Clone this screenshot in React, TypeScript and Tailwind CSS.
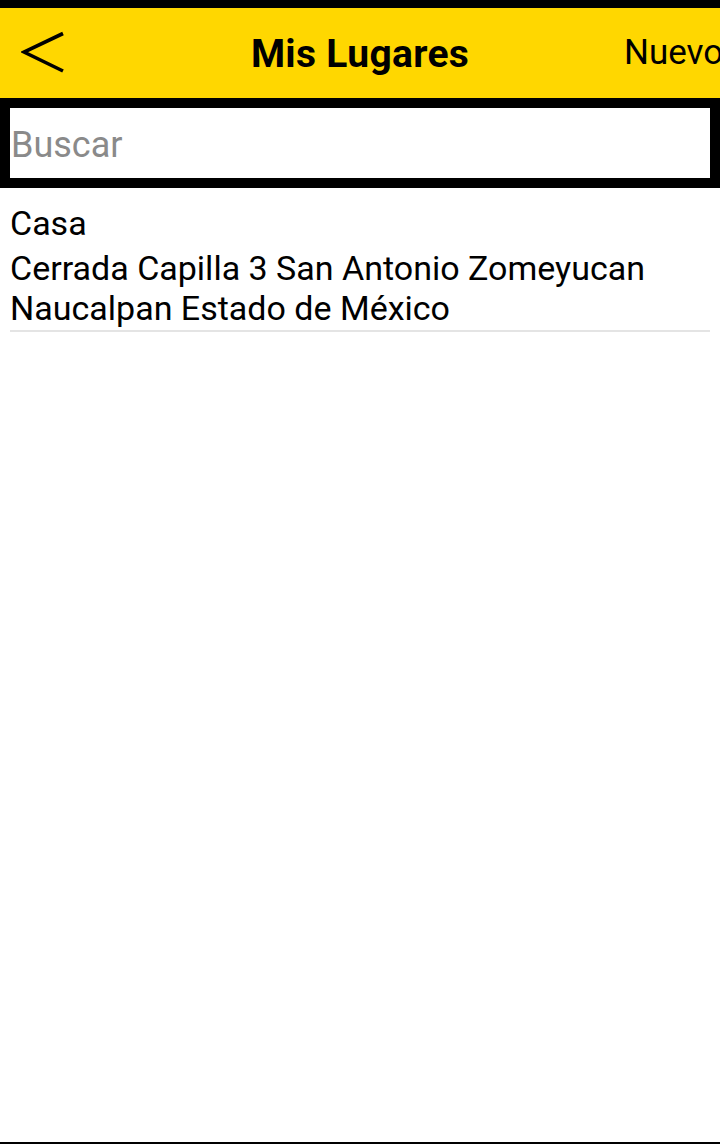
export default function App() {
  return (
    <div className="w-[720px] h-[1144px] bg-white flex flex-col overflow-hidden font-['Roboto',sans-serif]">
      <div className="h-[8px] bg-black" />
      {/* Header */}
      <div className="h-[90px] bg-[#ffd700] relative flex items-center justify-center">
        <svg
          className="absolute left-[21px] top-[23px]"
          width="46"
          height="44"
          viewBox="0 0 46 44"
          fill="none"
        >
          <path d="M42 2.5 L3 21 L42 40" stroke="#000" strokeWidth="3.6" />
        </svg>
        <h1 className="text-[39px] font-bold text-black leading-none pt-[2px] tracking-[0.3px]">Mis Lugares</h1>
        <span className="absolute left-[624px] top-[27px] text-[35px] leading-none text-black whitespace-nowrap">
          Nuevo
        </span>
      </div>
      {/* Search */}
      <div className="bg-black px-[10px] pt-[10px] pb-[10px]">
        <div className="h-[70px] bg-white flex items-center px-[1px]">
          <span className="text-[36px] text-[#8a8a8a] leading-none pt-[4px]">Buscar</span>
        </div>
      </div>
      {/* List */}
      <div className="px-[10px] pt-[15px]">
        <div className="border-b-2 border-[#e4e4e4] pb-[2px]">
          <p className="text-[34px] leading-[40px] text-black">Casa</p>
          <p className="text-[34px] leading-[40px] text-black mt-[5px]">
            Cerrada Capilla 3 San Antonio Zomeyucan
            <br />
            Naucalpan Estado de México
          </p>
        </div>
      </div>
      <div className="flex-1" />
      <div className="h-[2px] bg-black" />
    </div>
  );
}
